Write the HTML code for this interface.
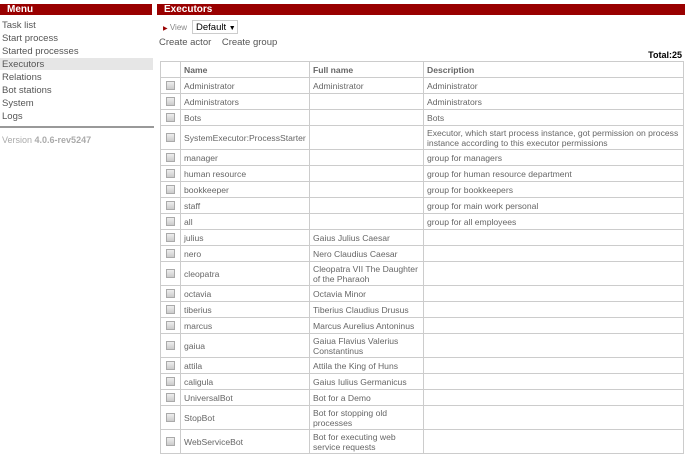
<!DOCTYPE html>
<html><head><style>
*{margin:0;padding:0;box-sizing:border-box}
body{width:685px;height:455px;overflow:hidden;background:#fff;font-family:"Liberation Sans",Arial,sans-serif;font-size:9px;color:#555;position:relative}
.bar{position:absolute;top:4px;height:11px;background:#990000;color:#fff;font-weight:bold;font-size:10px;line-height:11px;padding-left:7px}
.menu a{position:absolute;left:2px;font-size:9.5px;color:#555;display:block}
.sel{position:absolute;left:0;top:58px;width:153px;height:12px;background:#e6e6e6}
table{position:absolute;left:160px;top:61px;width:524px;border-collapse:collapse;table-layout:fixed}
td,th{border:1px solid #ccc;padding:0 2px 0 3px;vertical-align:middle;line-height:10px;text-align:left;font-size:8.6px;color:#666}
th{font-weight:bold;height:16px}
tr{height:16px}
tr.d{height:24px}
.cb{width:9px;height:9px;border:1px solid #aaa;background:linear-gradient(#eee,#ccc);margin:0 auto}
td:first-child{padding:0}
</style></head><body>
<div class="bar" style="left:0;width:152px">Menu</div>
<div class="bar" style="left:157px;width:528px">Executors</div>
<div class="sel"></div>
<div class="menu">
<a style="top:20px">Task list</a>
<a style="top:33px">Start process</a>
<a style="top:46px">Started processes</a>
<a style="top:59px">Executors</a>
<a style="top:72px">Relations</a>
<a style="top:85px">Bot stations</a>
<a style="top:98px">System</a>
<a style="top:111px">Logs</a>
</div>
<div style="position:absolute;left:0;top:126px;width:154px;height:2px;background:#999"></div>
<div style="position:absolute;left:2px;top:135px;font-size:9px;color:#aaa">Version <b style="color:#aaa">4.0.6-rev5247</b></div>
<div style="position:absolute;left:163px;top:23px;font-size:8px;color:#888"><span style="color:#990000;font-size:6px">&#9654;</span> View</div>
<div style="position:absolute;left:192px;top:20px;width:46px;height:14px;border:1px solid #ccc;background:#fff;font-size:9.5px;color:#000;padding:1px 0 0 3px">Default <span style="font-size:7px">&#9660;</span></div>
<div style="position:absolute;left:159px;top:37px;font-size:9.5px;color:#555">Create actor &nbsp;&nbsp;&nbsp;Create group</div>
<div style="position:absolute;right:3px;top:50px;font-size:9px;font-weight:bold;color:#000">Total:25</div>
<table>
<colgroup><col style="width:20px"><col style="width:129px"><col style="width:114px"><col></colgroup>
<tr><th></th><th>Name</th><th>Full name</th><th>Description</th></tr>
<tr><td><div class="cb"></div></td><td>Administrator</td><td>Administrator</td><td>Administrator</td></tr>
<tr><td><div class="cb"></div></td><td>Administrators</td><td></td><td>Administrators</td></tr>
<tr><td><div class="cb"></div></td><td>Bots</td><td></td><td>Bots</td></tr>
<tr class="d"><td><div class="cb"></div></td><td>SystemExecutor:ProcessStarter</td><td></td><td>Executor, which start process instance, got permission on process instance according to this executor permissions</td></tr>
<tr><td><div class="cb"></div></td><td>manager</td><td></td><td>group for managers</td></tr>
<tr><td><div class="cb"></div></td><td>human resource</td><td></td><td>group for human resource department</td></tr>
<tr><td><div class="cb"></div></td><td>bookkeeper</td><td></td><td>group for bookkeepers</td></tr>
<tr><td><div class="cb"></div></td><td>staff</td><td></td><td>group for main work personal</td></tr>
<tr><td><div class="cb"></div></td><td>all</td><td></td><td>group for all employees</td></tr>
<tr><td><div class="cb"></div></td><td>julius</td><td>Gaius Julius Caesar</td><td></td></tr>
<tr><td><div class="cb"></div></td><td>nero</td><td>Nero Claudius Caesar</td><td></td></tr>
<tr class="d"><td><div class="cb"></div></td><td>cleopatra</td><td>Cleopatra VII The Daughter of the Pharaoh</td><td></td></tr>
<tr><td><div class="cb"></div></td><td>octavia</td><td>Octavia Minor</td><td></td></tr>
<tr><td><div class="cb"></div></td><td>tiberius</td><td>Tiberius Claudius Drusus</td><td></td></tr>
<tr><td><div class="cb"></div></td><td>marcus</td><td>Marcus Aurelius Antoninus</td><td></td></tr>
<tr class="d"><td><div class="cb"></div></td><td>gaiua</td><td>Gaiua Flavius Valerius Constantinus</td><td></td></tr>
<tr><td><div class="cb"></div></td><td>attila</td><td>Attila the King of Huns</td><td></td></tr>
<tr><td><div class="cb"></div></td><td>caligula</td><td>Gaius Iulius Germanicus</td><td></td></tr>
<tr><td><div class="cb"></div></td><td>UniversalBot</td><td>Bot for a Demo</td><td></td></tr>
<tr class="d"><td><div class="cb"></div></td><td>StopBot</td><td>Bot for stopping old processes</td><td></td></tr>
<tr class="d"><td><div class="cb"></div></td><td>WebServiceBot</td><td>Bot for executing web service requests</td><td></td></tr>
</table>
</body></html>
